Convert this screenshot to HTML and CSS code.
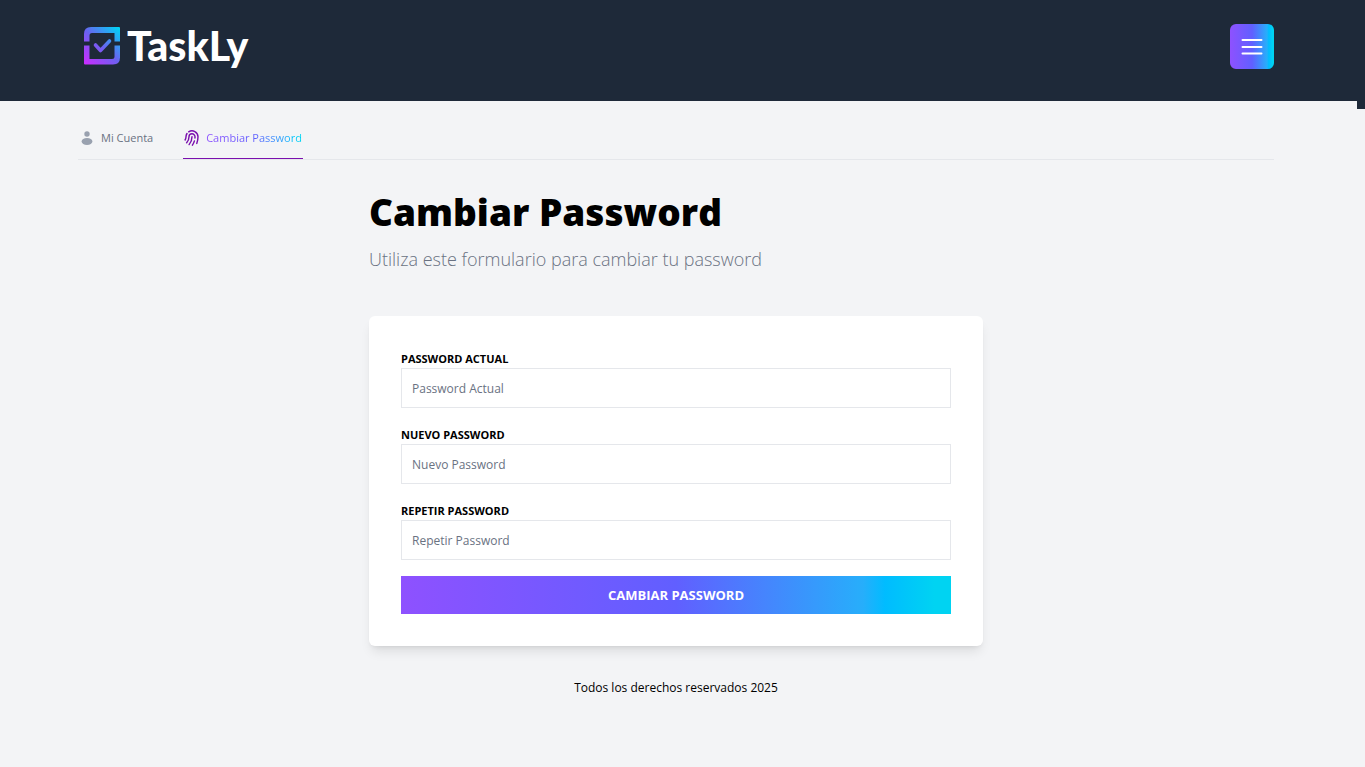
FILE: index.html
```html
<!DOCTYPE html>
<html lang="es">
<head>
<meta charset="utf-8">
<meta name="viewport" content="width=device-width, initial-scale=1">
<title>Taskly</title>
<link rel="stylesheet" href="styles.css">
</head>
<body>
<header class="header">
  <div class="container header-row">
    <a class="logo" href="#">
      <svg class="logo-mark" viewBox="0 0 36 38" aria-hidden="true">
        <defs>
          <linearGradient id="brand" gradientUnits="userSpaceOnUse" x1="1" y1="37" x2="35" y2="1">
            <stop offset="0" stop-color="#cb2cff"/>
            <stop offset=".5" stop-color="#6a62f0"/>
            <stop offset="1" stop-color="#00d3f5"/>
          </linearGradient>
        </defs>
        <path fill="url(#brand)" d="M0 14.500V7Q0 0 7 0H35Q36 0 36 1V14.500H30.500V6H8Q5.500 6 5.500 8.500V14.500ZM0 18.500H5.500V32H28Q30.500 32 30.500 29.500V18.500H36V30.500Q36 37.500 29 37.500H1Q0 37.500 0 36.500Z"/>
        <path fill="none" stroke="url(#brand)" stroke-width="3.600" stroke-linecap="round" stroke-linejoin="round" d="M11.500 18 16.500 23.500 25.500 14"/>
      </svg>
      <span class="logo-text">TaskLy</span>
    </a>
    <button class="menu-button" type="button" aria-label="Menú">
      <svg class="menu-icon" viewBox="0 0 22 20" aria-hidden="true"><path d="M1.500 3H20.500M1.500 10H20.500M1.500 16.500H20.500"/></svg>
    </button>
  </div>
  <span class="header-corner"></span>
</header>
<div class="container">
  <nav class="tabs">
    <a class="tab" href="#">
      <svg class="tab-icon" viewBox="0 0 16 16" aria-hidden="true"><circle cx="8" cy="4" r="2.700" fill="#99a1af"/><ellipse cx="8" cy="11.500" rx="5.400" ry="3.400" fill="#99a1af"/></svg>
      <span>Mi Cuenta</span>
    </a>
    <a class="tab tab-active" href="#">
      <svg class="tab-icon" viewBox="0 0 24 24" aria-hidden="true"><path fill="none" stroke="#7a0fae" stroke-width="1.800" stroke-linecap="round" stroke-linejoin="round" d="M7.864 4.243A7.500 7.500 0 0 1 19.500 10.500c0 2.920-.556 5.709-1.568 8.268M5.742 6.364A7.465 7.465 0 0 0 4.500 10.500a7.464 7.464 0 0 1-1.150 3.993m1.989 3.559A11.209 11.209 0 0 0 8.250 10.500a3.750 3.750 0 1 1 7.500 0c0 .527-.021 1.049-.064 1.565M12 10.500a14.940 14.940 0 0 1-3.600 9.750m6.633-4.596a18.666 18.666 0 0 1-2.485 5.330" transform="translate(-2.400 -2.400) scale(1.200)"/></svg>
      <span class="tab-gradient">Cambiar Password</span>
    </a>
  </nav>
  <main class="content">
    <h1 class="title">Cambiar Password</h1>
    <p class="subtitle">Utiliza este formulario para cambiar tu password</p>
    <form class="card">
      <div class="field">
        <label class="label" for="current">Password Actual</label>
        <input class="input" id="current" type="password" placeholder="Password Actual">
      </div>
      <div class="field">
        <label class="label" for="new">Nuevo Password</label>
        <input class="input" id="new" type="password" placeholder="Nuevo Password">
      </div>
      <div class="field">
        <label class="label" for="repeat">Repetir Password</label>
        <input class="input" id="repeat" type="password" placeholder="Repetir Password">
      </div>
      <button class="submit" type="submit">Cambiar Password</button>
    </form>
  </main>
  <footer class="footer">Todos los derechos reservados 2025</footer>
</div>
</body>
</html>
```
FILE: styles.css
```css
:root {
  --gradient: linear-gradient(90deg, #8e51ff 0%, #615fff 50%, #27aefb 84%, #00bcff 88%, #00d3f2 97%);
}

* { box-sizing: border-box; }

body {
  margin: 0;
  background: #f3f4f6;
  color: #000;
  font-family: "Open Sans", "Noto Sans", sans-serif;
  font-size: 12px;
}

.container {
  width: calc(100% - 169px);
  margin-left: 78px;
}

.header {
  position: relative;
  padding: 24px 0 32px;
  background: #1e2939;
}

.header-row {
  display: flex;
  align-items: center;
  justify-content: space-between;
}

.header-corner {
  position: absolute;
  top: 100%;
  right: 0;
  width: 8px;
  height: 8px;
  background: #1e2939;
}

.logo {
  display: flex;
  align-items: center;
  gap: 7px;
  padding: 0 0 2px 6px;
  color: #fff;
  text-decoration: none;
}

.logo-mark { width: 36px; height: 38px; }

.logo-text {
  font: 900 41px/42px Lato, sans-serif;
}

.menu-button {
  display: grid;
  place-items: center;
  width: 44px;
  height: 45px;
  padding: 0;
  border: 0;
  border-radius: 6px;
  background: var(--gradient);
}

.menu-icon {
  width: 22px;
  height: 20px;
  fill: none;
  stroke: #fff;
  stroke-width: 2;
  stroke-linecap: round;
}

.tabs {
  display: flex;
  gap: 27px;
  height: 59px;
  border-bottom: 1px solid #e5e7eb;
}

.tab {
  display: flex;
  align-items: center;
  gap: 6px;
  padding: 16px 3px 0 1px;
  border-bottom: 1px solid transparent;
  color: #6a7282;
  font-size: 11px;
  font-weight: 500;
  text-decoration: none;
}

.tab-active {
  padding-right: 1px;
  border-bottom-color: #7a0fae;
}

.tab-icon { width: 16px; height: 16px; }

.tab-gradient {
  background: var(--gradient);
  background-clip: text;
  color: transparent;
}

.content {
  max-width: 614px;
  margin: 0 auto;
  padding-top: 32px;
}

.title {
  margin: 0;
  font-size: 37px;
  font-weight: 800;
  line-height: 40px;
}

.subtitle {
  margin: 13px 0 43px;
  color: #6a7282;
  font-size: 18px;
  font-weight: 300;
  line-height: 28px;
}

.card {
  display: flex;
  flex-direction: column;
  gap: 16px;
  padding: 32px;
  border-radius: 6px;
  background: #fff;
  box-shadow: 0 8px 12px -3px #0000001a, 0 3px 5px -3px #0000001a;
}

.field {
  display: flex;
  flex-direction: column;
}

.label {
  padding-top: 2px;
  font-size: 11px;
  font-weight: 700;
  line-height: 18px;
  text-transform: uppercase;
}

.input {
  width: 100%;
  height: 40px;
  padding: 0 10px;
  border: 1px solid #e5e7eb;
  background: #fff;
  font: 400 12px "Open Sans", "Noto Sans", sans-serif;
}

.input::placeholder { color: #6a7282; }

.submit {
  height: 38px;
  border: 0;
  background: var(--gradient);
  color: #fff;
  font: 700 13px "Open Sans", "Noto Sans", sans-serif;
  text-transform: uppercase;
}

.footer {
  padding: 32px 0;
  line-height: 20px;
  text-align: center;
}
```
